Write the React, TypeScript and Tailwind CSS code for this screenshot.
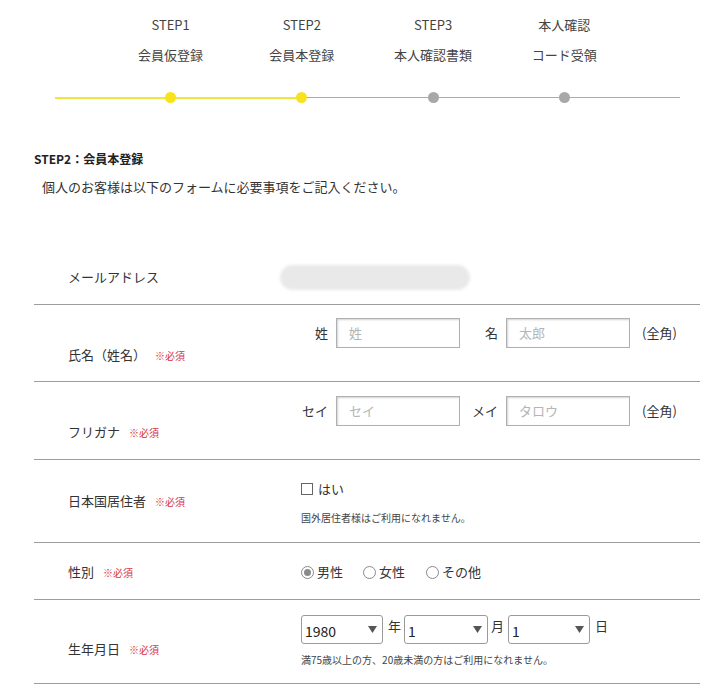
import React from "react";

const font = { fontFamily: '"Noto Sans CJK JP", "Noto Sans", sans-serif' };

function Req() {
  return <span className="ml-[9px] text-[10px] text-[#d8343a]">※必須</span>;
}

function Tri() {
  return (
    <svg width="9" height="7" viewBox="0 0 9 7" className="shrink-0">
      <polygon points="0,0 9,0 4.5,7" fill="#555" />
    </svg>
  );
}

function Sel({ v, w }: { v: string; w: string }) {
  return (
    <div className={`${w} h-[29px] border border-[#9a9a9a] rounded-[3px] flex items-center justify-between pl-[3px] pr-[5px] bg-white`}>
      <span className="text-[14px] text-[#222] pt-[3px]">{v}</span>
      <Tri />
    </div>
  );
}

function Inp({ ph }: { ph: string }) {
  return (
    <div className="w-[124px] h-[30px] ml-[8px] border border-[#b0b0b0] shadow-[inset_1px_1px_2px_rgba(0,0,0,0.18)] flex items-center pl-[12px] text-[13px] text-[#b5b5b5]">
      {ph}
    </div>
  );
}

function Radio({ on }: { on?: boolean }) {
  return (
    <span className="w-[13px] h-[13px] rounded-full border border-[#888] flex items-center justify-center mr-[3px]">
      {on && <span className="w-[7px] h-[7px] rounded-full bg-[#8a8a8a]" />}
    </span>
  );
}

const steps = [
  ["STEP1", "会員仮登録"],
  ["STEP2", "会員本登録"],
  ["STEP3", "本人確認書類"],
  ["本人確認", "コード受領"],
];

export default function App() {
  return (
    <div className="w-[722px] h-[692px] bg-white text-[#333] overflow-hidden" style={font}>
      {/* stepper */}
      <div className="ml-[55px] w-[625px] pt-[10px]">
        <div className="px-[50px] grid grid-cols-4 text-[13px] leading-[30px] text-center text-[#444]">
          {steps.map(([a, b]) => (
            <div key={a}>
              <div>{a}</div>
              <div>{b}</div>
            </div>
          ))}
        </div>
        <div className="relative mt-[22px] h-[12px]">
          <div className="absolute left-0 top-[5px] h-[2px] w-[247px] bg-[#f3e63a]" />
          <div className="absolute left-[247px] right-0 top-[5px] h-[1px] bg-[#aaa]" />
          <div className="px-[50px] grid grid-cols-4 h-[12px]">
            {[0, 1, 2, 3].map((i) => (
              <div key={i} className="flex justify-center relative">
                <div className={`w-[11px] h-[11px] rounded-full ${i < 2 ? "bg-[#f7e21b]" : "bg-[#a8a8a8]"}`} />
              </div>
            ))}
          </div>
        </div>
      </div>

      {/* heading */}
      <div className="px-[34px] mt-[46px]">
        <div className="text-[12px] leading-[18px] font-bold text-[#222]">STEP2：会員本登録</div>
        <div className="mt-[9px] pl-[8px] text-[13px] leading-[20px] text-[#333]">
          個人のお客様は以下のフォームに必要事項をご記入ください。
        </div>
      </div>

      {/* form */}
      <div className="mx-[34px] w-[666px] mt-[53px] text-[13px] leading-[20px]">
        {/* email */}
        <div className="flex h-[55px] border-b border-[#9d9d9d]">
          <div className="w-[246px] pl-[34px] pt-[17px]">メールアドレス</div>
          <div className="pt-[15px]">
            <div className="w-[190px] h-[25px] rounded-full bg-[#e9e9e9] blur-[1.5px]" />
          </div>
        </div>
        {/* name */}
        <div className="flex h-[77px] border-b border-[#9d9d9d]">
          <div className="w-[266px] pl-[34px] pt-[40px]">
            氏名（姓名）<Req />
          </div>
          <div className="pt-[13px] flex items-center h-[43px]">
            <span className="w-[28px] text-right">姓</span>
            <Inp ph="姓" />
            <span className="w-[30px] ml-[8px] text-right">名</span>
            <Inp ph="太郎" />
            <span className="ml-[12px]">(全角)</span>
          </div>
        </div>
        {/* kana */}
        <div className="flex h-[78px] border-b border-[#9d9d9d]">
          <div className="w-[266px] pl-[34px] pt-[40px]">
            フリガナ<Req />
          </div>
          <div className="pt-[14px] flex items-center h-[44px]">
            <span className="w-[28px] text-right">セイ</span>
            <Inp ph="セイ" />
            <span className="w-[30px] ml-[8px] text-right">メイ</span>
            <Inp ph="タロウ" />
            <span className="ml-[12px]">(全角)</span>
          </div>
        </div>
        {/* resident */}
        <div className="flex h-[83px] border-b border-[#9d9d9d]">
          <div className="w-[266px] pl-[34px] pt-[31px]">
            日本国居住者<Req />
          </div>
          <div className="pt-[19px] pl-[1px]">
            <div className="flex items-center">
              <span className="w-[12px] h-[12px] border border-[#666] mr-[5px]" />
              <span>はい</span>
            </div>
            <div className="mt-[12px] text-[10px] leading-[14px] text-[#444]">国外居住者様はご利用になれません。</div>
          </div>
        </div>
        {/* gender */}
        <div className="flex h-[57px] border-b border-[#9d9d9d]">
          <div className="w-[266px] pl-[34px] pt-[19px]">
            性別<Req />
          </div>
          <div className="pt-[19px] pl-[1px] flex items-center h-[39px]">
            <Radio on />
            <span>男性</span>
            <span className="w-[20px]" />
            <Radio />
            <span>女性</span>
            <span className="w-[21px]" />
            <Radio />
            <span>その他</span>
          </div>
        </div>
        {/* birthday */}
        <div className="flex h-[84px] border-b border-[#9d9d9d]">
          <div className="w-[266px] pl-[34px] pt-[39px]">
            生年月日<Req />
          </div>
          <div className="pt-[15px] pl-[1px]">
            <div className="flex items-start">
              <Sel v="1980" w="w-[82px]" />
              <span className="ml-[5px] mr-[3px] leading-[22px]">年</span>
              <Sel v="1" w="w-[84px]" />
              <span className="ml-[3px] mr-[4px] leading-[22px]">月</span>
              <Sel v="1" w="w-[82px]" />
              <span className="ml-[5px] leading-[22px]">日</span>
            </div>
            <div className="mt-[9px] text-[10px] leading-[14px] text-[#444]">満75歳以上の方、20歳未満の方はご利用になれません。</div>
          </div>
        </div>
      </div>
    </div>
  );
}
